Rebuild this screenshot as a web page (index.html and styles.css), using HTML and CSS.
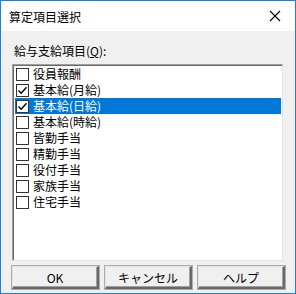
FILE: index.html
```html
<!DOCTYPE html>
<html lang="ja">
<head>
    <meta charset="UTF-8">
    <title>算定項目選択</title>
    <link rel="stylesheet" href="styles.css">
</head>
<body>
<div class="window">
    <div class="titlebar">
        <span class="title">算定項目選択</span>
        <svg class="close" width="12" height="12" viewBox="0 0 12 12">
            <path d="M1 1 L11 11 M11 1 L1 11" stroke="#000" stroke-width="1.1" fill="none"/>
        </svg>
    </div>
    <div class="client">
        <div class="caption">給与支給項目(<u>Q</u>):</div>
        <div class="listbox">
            <div class="item"><span class="box"></span>役員報酬</div>
            <div class="item"><span class="box checked"><svg width="11" height="11" viewBox="0 0 11 11"><path d="M1.5 5.5 L4.2 8.3 L9.5 2.2" stroke="#000" stroke-width="1.4" fill="none"/></svg></span>基本給(月給)</div>
            <div class="item selected"><span class="box checked"><svg width="11" height="11" viewBox="0 0 11 11"><path d="M1.5 5.5 L4.2 8.3 L9.5 2.2" stroke="#000" stroke-width="1.4" fill="none"/></svg></span>基本給(日給)</div>
            <div class="item"><span class="box"></span>基本給(時給)</div>
            <div class="item"><span class="box"></span>皆勤手当</div>
            <div class="item"><span class="box"></span>精勤手当</div>
            <div class="item"><span class="box"></span>役付手当</div>
            <div class="item"><span class="box"></span>家族手当</div>
            <div class="item"><span class="box"></span>住宅手当</div>
        </div>
        <div class="buttons">
            <button class="btn">OK</button>
            <button class="btn">キャンセル</button>
            <button class="btn">ヘルプ</button>
        </div>
    </div>
</div>
</body>
</html>
```

FILE: styles.css
```css
body {
    margin: 0;
    font-family: "Noto Sans CJK JP", "Liberation Sans", sans-serif;
    font-size: 12px;
    color: #000;
    background: #fff;
}

.window {
    width: 296px;
    height: 294px;
    box-sizing: border-box;
    border: 1px solid #1883d7;
    display: flex;
    flex-direction: column;
}

/* title bar */
.titlebar {
    height: 30px;
    background: #fff;
    display: flex;
    align-items: center;
    justify-content: space-between;
    padding: 0 14px 0 8px;
}

.title {
    font-size: 12px;
}

/* dialog body */
.client {
    flex: 1;
    background: #f0f0f0;
    padding: 12px 9px 0 11px;
    display: flex;
    flex-direction: column;
}

.caption {
    height: 16px;
    line-height: 16px;
    padding-left: 2px;
    margin-bottom: 5px;
}

/* sunken list box */
.listbox {
    width: 271px;
    height: 197px;
    box-sizing: border-box;
    background: #fff;
    border: 1px solid;
    border-color: #a0a0a0 #e3e3e3 #e3e3e3 #a0a0a0;
    box-shadow: inset 1px 1px 0 #696969;
    padding: 1px 1px 0 2px;
}

.item {
    height: 16px;
    line-height: 16px;
    display: flex;
    align-items: center;
    white-space: nowrap;
}

.item.selected {
    background: #0078d7;
    color: #fff;
}

.box {
    width: 11px;
    height: 11px;
    border: 1px solid #333;
    background: #fff;
    margin: 0 4px 0 1px;
    display: flex;
    align-items: center;
    justify-content: center;
}

.box svg {
    display: block;
}

/* button row */
.buttons {
    display: flex;
    gap: 6px;
    margin-top: 5px;
}

.btn {
    width: 87px;
    height: 23px;
    font-family: "Noto Sans CJK JP", "Liberation Sans", sans-serif;
    font-size: 12px;
    background: #f0f0f0;
    border-style: solid;
    border-width: 1px 2px 2px 1px;
    border-color: #e3e3e3 #696969 #696969 #e3e3e3;
    box-shadow: inset -1px -1px 0 #a0a0a0, 0 0 0 1px #adadad;
    padding: 0;
    color: #000;
}
```
